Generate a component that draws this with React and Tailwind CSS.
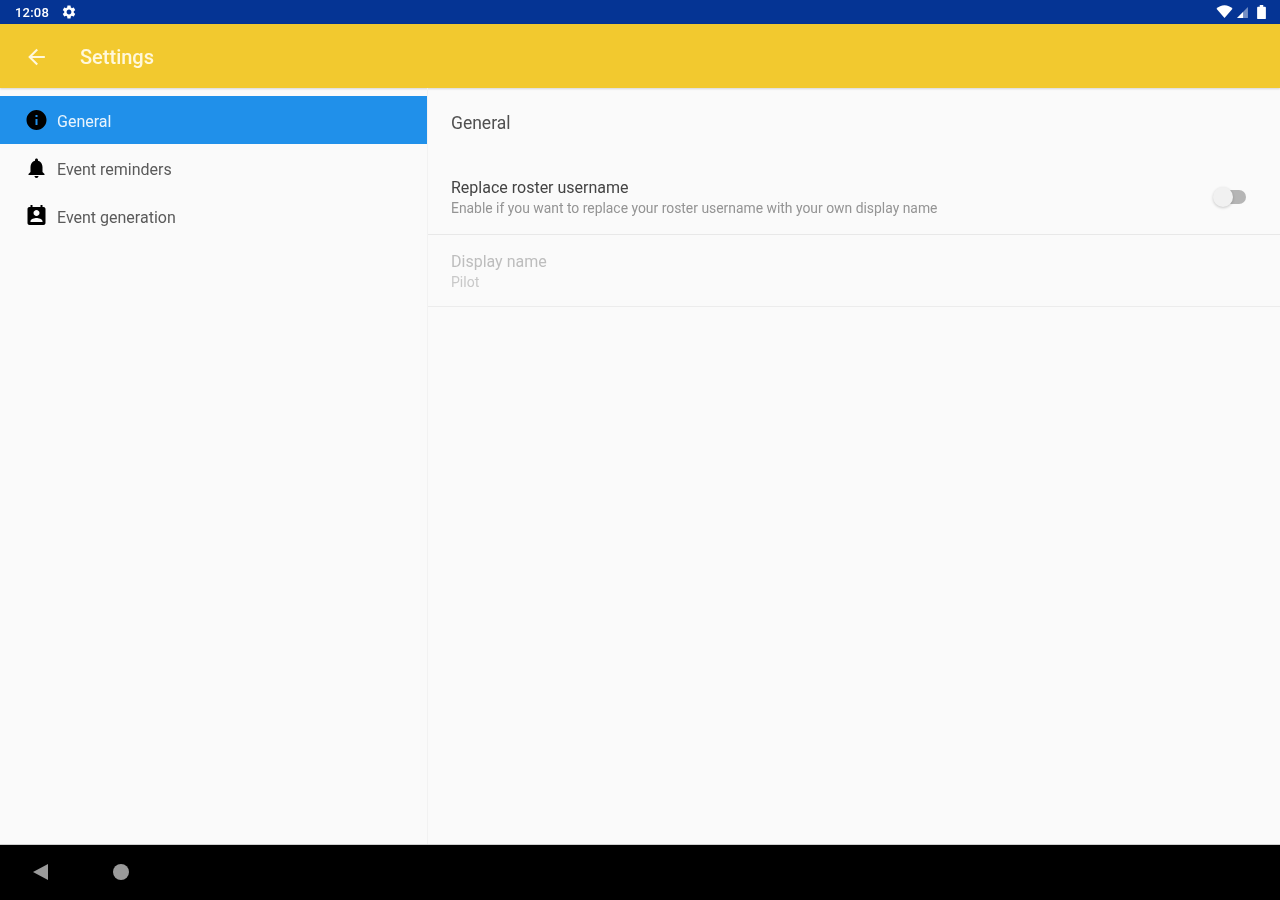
import React from "react";

function NavItem({ icon, label, active }) {
  return (
    <div className={`flex h-12 items-center pl-[26px] ${active ? "bg-[#2090ea] text-[#e8f4fd]" : "text-[#5a5a5a]"}`}>
      <span className="flex h-5 w-5 shrink-0 translate-x-[0.5px] items-center justify-center">{icon}</span>
      <span className="ml-[11px] pt-[4px] text-[16px] leading-5">{label}</span>
    </div>
  );
}

const InfoIcon = (
  <svg viewBox="0 0 24 24" className="h-6 w-6 shrink-0" fill="#000">
    <path d="M12 2C6.48 2 2 6.48 2 12s4.48 10 10 10 10-4.48 10-10S17.52 2 12 2zm1 15h-2v-6h2v6zm0-8h-2V7h2v2z" />
  </svg>
);
const BellIcon = (
  <svg viewBox="0 0 24 24" className="h-6 w-6 shrink-0" fill="#000">
    <path d="M12 22c1.1 0 2-.9 2-2h-4c0 1.1.9 2 2 2zm6-6v-5c0-3.07-1.63-5.64-4.5-6.32V4c0-.83-.67-1.5-1.5-1.5s-1.5.67-1.5 1.5v.68C7.64 5.36 6 7.92 6 11v5l-2 2v1h16v-1l-2-2z" />
  </svg>
);
const CalendarIcon = (
  <svg viewBox="0 0 24 24" className="h-6 w-6 shrink-0" fill="#000">
    <path d="M19 3h-1V1h-2v2H8V1H6v2H5c-1.11 0-2 .9-2 2v14c0 1.1.89 2 2 2h14c1.1 0 2-.9 2-2V5c0-1.1-.9-2-2-2zm-7 3c1.66 0 3 1.34 3 3s-1.34 3-3 3-3-1.34-3-3 1.34-3 3-3zm6 12H6v-1c0-2 4-3.1 6-3.1s6 1.1 6 3.1v1z" />
  </svg>
);

export default function App() {
  return (
    <div className="flex h-[900px] w-[1280px] flex-col overflow-hidden bg-[#fafafa] font-['Roboto',sans-serif] blur-[0.75px]">
      {/* status bar */}
      <div className="flex h-6 shrink-0 items-center justify-between bg-[#053494] pl-[15px] pr-[14px] text-white">
        <div className="flex items-center gap-[11px]">
          <span className="text-[13px] font-medium leading-none tracking-[0.2px]">12:08</span>
          <svg viewBox="0 0 24 24" className="h-4 w-4 translate-x-[1px]" fill="#fff">
            <path d="M19.14 12.94c.04-.3.06-.61.06-.94 0-.32-.02-.64-.07-.94l2.03-1.58a.49.49 0 00.12-.61l-1.92-3.32a.488.488 0 00-.59-.22l-2.39.96c-.5-.38-1.03-.7-1.62-.94l-.36-2.54a.484.484 0 00-.48-.41h-3.84c-.24 0-.43.17-.47.41l-.36 2.54c-.59.24-1.13.57-1.62.94l-2.39-.96c-.22-.08-.47 0-.59.22L2.74 8.87c-.12.21-.08.47.12.61l2.03 1.58c-.05.3-.09.63-.09.94s.02.64.07.94l-2.03 1.58a.49.49 0 00-.12.61l1.92 3.32c.12.22.37.29.59.22l2.39-.96c.5.38 1.03.7 1.62.94l.36 2.54c.05.24.24.41.48.41h3.84c.24 0 .44-.17.47-.41l.36-2.54c.59-.24 1.13-.56 1.62-.94l2.39.96c.22.08.47 0 .59-.22l1.92-3.32c.12-.22.07-.47-.12-.61l-2.01-1.58zM12 15.6c-1.98 0-3.6-1.62-3.6-3.6s1.62-3.6 3.6-3.6 3.6 1.62 3.6 3.6-1.62 3.6-3.6 3.6z" />
          </svg>
        </div>
        <div className="flex items-center gap-[3px]">
          <svg viewBox="0 0 24 24" className="h-[16px] w-[17px]" fill="#fff">
            <path d="M12 21L0 7c3-3 7.5-5 12-5s9 2 12 5L12 21z" />
          </svg>
          <svg viewBox="0 0 24 24" className="h-[13px] w-[13px]">
            <path d="M22 2v20H2L22 2z" fill="#fff" fillOpacity="0.45" />
            <path d="M13 11v11H2l11-11z" fill="#fff" />
          </svg>
          <svg viewBox="0 0 10 16" className="ml-[5px] h-[14px] w-[9px]" fill="#fff">
            <path d="M3 0h4v2h2a1 1 0 011 1v12a1 1 0 01-1 1H1a1 1 0 01-1-1V3a1 1 0 011-1h2V0z" />
          </svg>
        </div>
      </div>

      {/* toolbar */}
      <div className="flex h-16 shrink-0 items-center bg-[#f2c92f] pl-[24px] text-[#fff8dc] shadow-[0_1px_2px_rgba(0,0,0,0.15)]">
        <svg viewBox="0 0 24 24" className="h-[25px] w-[25px] translate-y-[0.5px]" fill="#fff8dc">
          <path d="M20 11H7.83l5.59-5.59L12 4l-8 8 8 8 1.41-1.41L7.83 13H20v-2z" />
        </svg>
        <span className="ml-[31px] pt-[2px] text-[20px] font-medium leading-none">Settings</span>
      </div>

      {/* body */}
      <div className="flex min-h-0 flex-1">
        <div className="w-[428px] shrink-0 border-r border-[#f2f2f2] pt-2">
          <NavItem icon={InfoIcon} label="General" active />
          <NavItem icon={BellIcon} label="Event reminders" />
          <NavItem icon={CalendarIcon} label="Event generation" />
        </div>
        <div className="min-w-0 flex-1">
          <div className="flex h-[70px] items-center pl-[23px] pt-[1px] text-[17.5px] text-[#505050]">General</div>
          <div className="flex h-[77px] items-center justify-between border-b border-[#e8e8e8] pl-[23px] pr-[34px]">
            <div className="pt-[4px]">
              <div className="text-[16px] leading-5 text-[#444444]">Replace roster username</div>
              <div className="text-[13.9px] leading-[20px] text-[#949494]">
                Enable if you want to replace your roster username with your own display name
              </div>
            </div>
            <div className="relative mt-[2px] h-[14px] w-[30px] rounded-full bg-[#b5b5b5]">
              <div className="absolute left-[-3px] top-[-3px] h-5 w-5 rounded-full bg-[#f1f1f1] shadow-[0_1px_3px_rgba(0,0,0,0.2)]" />
            </div>
          </div>
          <div className="flex h-[72px] flex-col justify-center border-b border-[#ececec] pl-[23px] pt-[2px]">
            <div className="text-[16px] leading-5 text-[#bdbdbd]">Display name</div>
            <div className="text-[14px] leading-5 text-[#c8c8c8]">Pilot</div>
          </div>
        </div>
      </div>

      {/* nav bar */}
      <div className="flex h-14 shrink-0 items-center border-t border-[#cfcfcf] bg-black pb-[1px] pl-[32px]">
        <svg viewBox="0 0 16 18" className="h-[18px] w-4" fill="#9a9a9a">
          <path d="M16 1v16L1 9z" />
        </svg>
        <div className="ml-[65px] h-4 w-4 rounded-full bg-[#9a9a9a]" />
      </div>
    </div>
  );
}
